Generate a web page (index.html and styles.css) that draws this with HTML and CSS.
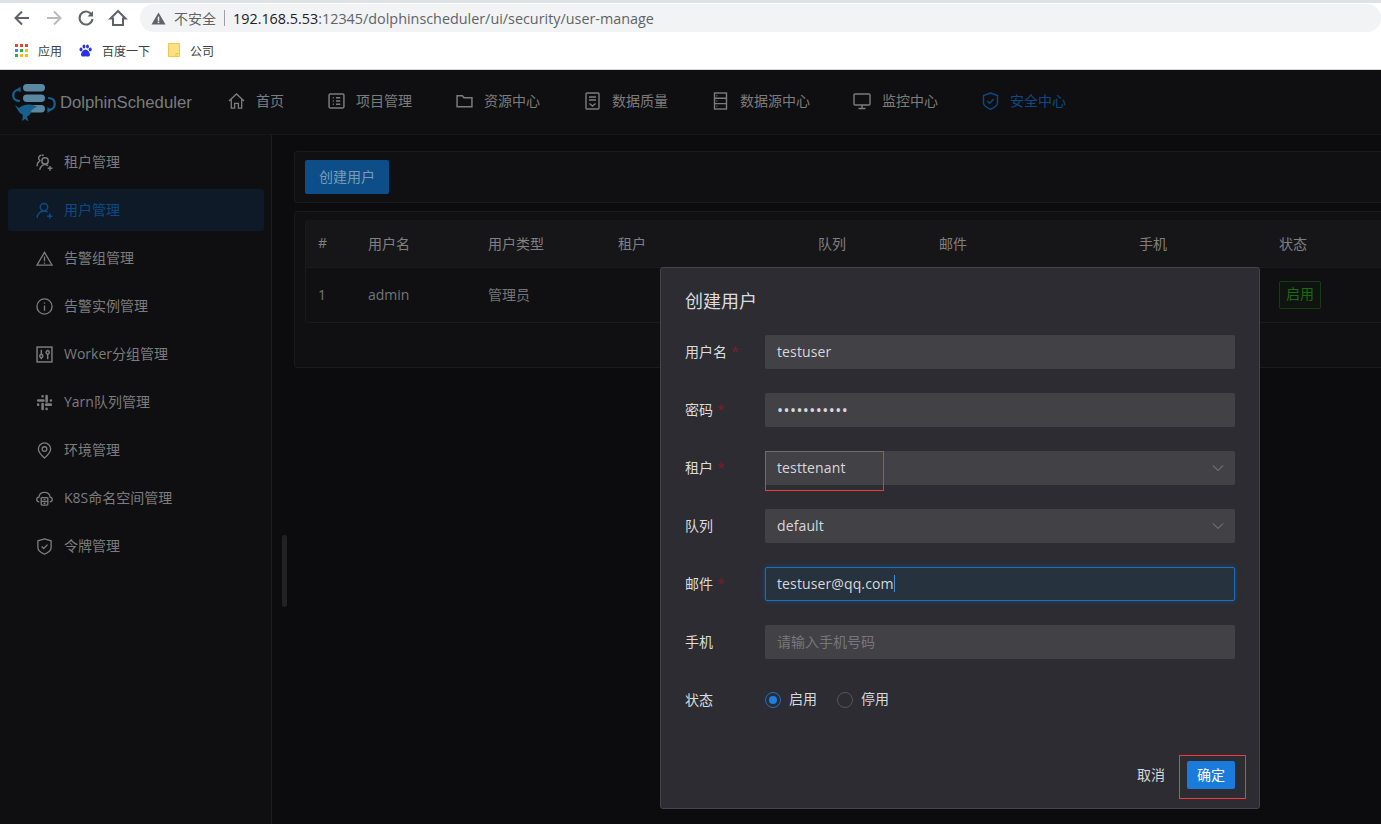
FILE: index.html
```html
<!DOCTYPE html>
<html lang="zh-CN">
<head>
<meta charset="utf-8">
<title>DolphinScheduler</title>
<link rel="stylesheet" href="styles.css">
</head>
<body>
<div class="browser">
  <div class="tabstrip"></div>
  <div class="toolbar">
    <div class="tool-btns">
      <svg class="tool" viewBox="0 0 20 20"><path d="M17 10H4M10 3.500 3.500 10l6.500 6.500"/></svg>
      <svg class="tool off" viewBox="0 0 20 20"><path d="M3 10h13M10 3.500l6.500 6.500-6.500 6.500"/></svg>
      <svg class="tool" viewBox="0 0 20 20"><path d="M15.800 7A6.500 6.500 0 1 0 16.500 11"/><path class="solid" d="M17 3v5.500h-5.500z"/></svg>
      <svg class="tool" viewBox="0 0 20 20"><path d="M10 3 2.500 10.500H5V17h10v-6.500h2.500z"/></svg>
    </div>
    <div class="omnibox">
      <svg class="warn" viewBox="0 0 16 16"><path d="M8 1.500 15.500 14.500H.5z"/><rect class="warn-mark" x="7.200" y="6" width="1.600" height="4.500"/><rect class="warn-mark" x="7.200" y="11.300" width="1.600" height="1.600"/></svg>
      <span class="insecure">不安全</span>
      <span class="omni-sep"></span>
      <span class="url"><span class="url-host">192.168.5.53</span>:12345/dolphinscheduler/ui/security/user-manage</span>
    </div>
  </div>
  <div class="bookmarks">
    <div class="bookmark">
      <svg class="bm-icon" viewBox="0 0 13 13"><rect width="3" height="3" fill="#ea4335"/><rect x="5" width="3" height="3" fill="#ea4335"/><rect x="10" width="3" height="3" fill="#ea4335"/><rect y="5" width="3" height="3" fill="#4285f4"/><rect x="5" y="5" width="3" height="3" fill="#34a853"/><rect x="10" y="5" width="3" height="3" fill="#fbbc05"/><rect y="10" width="3" height="3" fill="#34a853"/><rect x="5" y="10" width="3" height="3" fill="#fbbc05"/><rect x="10" y="10" width="3" height="3" fill="#fbbc05"/></svg>
      <span>应用</span>
    </div>
    <div class="bookmark">
      <svg class="bm-icon" viewBox="0 0 13 13" fill="#2932e1"><ellipse cx="2" cy="5.500" rx="1.500" ry="2"/><ellipse cx="5" cy="2.500" rx="1.400" ry="2"/><ellipse cx="8.500" cy="2.500" rx="1.400" ry="2"/><ellipse cx="11.200" cy="5.500" rx="1.500" ry="2"/><path d="M6.500 5.500c2 0 4.500 3 4.500 5.200 0 2-2.500 2-4.500 1.600-2 .4-4.500.4-4.500-1.600C2 8.500 4.500 5.500 6.500 5.500z"/></svg>
      <span>百度一下</span>
    </div>
    <div class="bookmark bookmark-last">
      <svg class="bm-icon folder" viewBox="0 0 12 14"><path d="M.5.500h7l4 0v13H.5z" fill="#ffe082" stroke="#f4c842"/><path d="M8 13V10.500h3.500" fill="none" stroke="#f4c842"/></svg>
      <span>公司</span>
    </div>
  </div>
</div>

<div class="app">
  <header class="topbar">
    <div class="brand">
      <svg class="logo" viewBox="0 0 44 37">
        <rect class="logo-pill" x="11" y="0" width="22" height="7.500" rx="3.700"/>
        <rect class="logo-pill" x="11" y="10.500" width="22" height="7.500" rx="3.700"/>
        <rect class="logo-pill" x="11" y="21" width="22" height="7.500" rx="3.700"/>
        <path class="logo-arc" d="M8.500 5.500C4 5.500 1.200 8 1.200 11.500S4 17 8 17"/>
        <path class="logo-fish" d="M8.500 2.500v6L4.500 5.500z"/>
        <path class="logo-arc" d="M36 14c4.500 0 6.800 2.500 6.800 6s-3 6-7.300 6"/>
        <path class="logo-fish" d="M35.500 23v6l4-3z"/>
        <path class="logo-fish" d="M3 21l4 3c2.500-2 6-3.500 10-3.500 3.500 0 6.500 1 8 2.500-2.500 .5-3.500 2-5.500 3 0 4-3 6-4.500 6.500.5 1.500 1 3 1.500 5l-3.500-2.500-3 2c.5-2 1-4 .5-6.500C7 29 6.500 27 5.500 25.500z"/>
      </svg>
      <span class="brand-name">DolphinScheduler</span>
    </div>
    <nav class="nav">
      <a class="nav-item"><svg class="ico nav-ico" viewBox="0 0 18 18"><path d="M1 9 9 1.500 17 9M3.500 7.500V16.500H7V11.500H11V16.500H14.500V7.500"/></svg><span>首页</span></a>
      <a class="nav-item"><svg class="ico nav-ico" viewBox="0 0 16 16"><rect x="1" y="1.500" width="14" height="13" rx="1"/><path d="M4.500 5h1M4.500 8h1M4.500 11h1M7.500 5h4M7.500 8h4M7.500 11h4"/></svg><span>项目管理</span></a>
      <a class="nav-item"><svg class="ico nav-ico" viewBox="0 0 16 16"><path d="M1 3h5l1.500 2H15v8.500H1z"/></svg><span>资源中心</span></a>
      <a class="nav-item"><svg class="ico nav-ico" viewBox="0 0 16 18"><rect x="1.500" y="1" width="13" height="16" rx="1"/><path d="M4.500 5h7M4.500 8h7M5 11.500 8 14l3-2.500"/></svg><span>数据质量</span></a>
      <a class="nav-item"><svg class="ico nav-ico" viewBox="0 0 16 18"><rect x="2" y="1" width="12" height="16"/><path d="M2 6.300h12M2 11.600h12M4 3.700h.8M4 9h.8M4 14.300h.8"/></svg><span>数据源中心</span></a>
      <a class="nav-item nav-tight"><svg class="ico nav-ico monitor" viewBox="0 0 18 18"><rect x="1" y="2" width="16" height="11" rx="1"/><path d="M9 13v3M5.500 16.500h7"/></svg><span>监控中心</span></a>
      <a class="nav-item active"><svg class="ico nav-ico" viewBox="0 0 16 18"><path d="M8 1 15 3.500V11c0 2.500-4 5-7 6.300C5 16 1 13.500 1 11V3.500z"/><path d="M5 9l2.200 2.200L11.200 7"/></svg><span>安全中心</span></a>
    </nav>
  </header>

  <div class="body-row">
    <aside class="sidebar">
      <a class="side-item"><svg class="ico side-ico" viewBox="0 0 16 16"><circle cx="8.500" cy="6.500" r="3"/><path d="M5 1.200a2.800 2.800 0 0 0-1.500 5C2 7.500 1 9.500 1 11.500M5.500 1c.6 0 1.200.2 1.700.6M3.500 15c.3-2.600 2.400-5 5-5 1 0 2 .3 2.800.9M11 13.500h4.500M13.200 11.300v4.500"/></svg><span>租户管理</span></a>
      <a class="side-item active"><svg class="ico side-ico" viewBox="0 0 16 16"><circle cx="7.500" cy="4.800" r="3.500"/><path d="M1 15c.3-3.500 3-6.500 6.500-6.500 1.300 0 2.500.4 3.500 1.100M10.500 13.300h5M13 10.800v5"/></svg><span>用户管理</span></a>
      <a class="side-item"><svg class="ico side-ico" viewBox="0 0 18 16"><path d="M9 1.500 17 15H1z"/><path d="M9 6v5M9 12.300v1.200"/></svg><span>告警组管理</span></a>
      <a class="side-item"><svg class="ico side-ico" viewBox="0 0 18 18"><circle cx="9" cy="9" r="8"/><path d="M9 8v5.500M9 4.800v1.400"/></svg><span>告警实例管理</span></a>
      <a class="side-item"><svg class="ico side-ico" viewBox="0 0 16 16"><rect x="1" y="1" width="14" height="14"/><path d="M5 3.500v9M11 3.500v9"/><circle class="dot" cx="5" cy="9.500" r="1.500"/><circle class="dot" cx="11" cy="6" r="1.500"/></svg><span>Worker分组管理</span></a>
      <a class="side-item"><svg class="ico side-ico slack" viewBox="0 0 16 16"><path d="M2 6.200h5M6.200 2.200h.01M10 2v5M14 6.200h.01M9.500 10h4.500M10 14h.01M6.200 9.500V14M2 10h.01"/></svg><span>Yarn队列管理</span></a>
      <a class="side-item"><svg class="ico side-ico" viewBox="0 0 16 18"><path d="M8 17C5 14.500 1.500 11.500 1.500 7.500a6.500 6.500 0 0 1 13 0C14.500 11.500 11 14.500 8 17z"/><circle cx="8" cy="7.500" r="2.500"/></svg><span>环境管理</span></a>
      <a class="side-item"><svg class="ico side-ico" viewBox="0 0 18 16"><path d="M3.500 11.500C1.800 11.500.8 10.300.8 9s1-2.300 2.300-2.500C3.500 3.500 6 1.500 9 1.500s5.500 2 5.900 5c1.300.2 2.300 1.200 2.300 2.500s-1 2.500-2.700 2.500"/><rect x="5.500" y="7" width="7" height="8" rx=".8"/><path d="M5.500 11h7M8 9h2M8 13h2"/></svg><span>K8S命名空间管理</span></a>
      <a class="side-item"><svg class="ico side-ico" viewBox="0 0 16 18"><path d="M8 1 15 3v7c0 3.500-3.500 5.700-7 7-3.500-1.300-7-3.500-7-7V3z"/><path d="M5 9l2.200 2.200L11.200 7"/></svg><span>令牌管理</span></a>
    </aside>

    <main class="content">
      <div class="scroll-thumb"></div>
      <section class="card card-actions">
        <button class="btn-create">创建用户</button>
      </section>
      <section class="card card-table">
        <table class="users">
          <colgroup>
            <col class="c-idx"><col class="c-name"><col class="c-type"><col class="c-tenant"><col class="c-queue"><col class="c-mail"><col class="c-phone"><col class="c-state">
          </colgroup>
          <thead>
            <tr><th>#</th><th>用户名</th><th>用户类型</th><th>租户</th><th>队列</th><th>邮件</th><th>手机</th><th>状态</th></tr>
          </thead>
          <tbody>
            <tr><td>1</td><td>admin</td><td>管理员</td><td></td><td></td><td></td><td></td><td class="cell-state"><span class="tag">启用</span></td></tr>
          </tbody>
        </table>
      </section>
    </main>
  </div>
</div>

<div class="modal">
  <h2 class="modal-title">创建用户</h2>
  <div class="form">
    <div class="row">
      <label class="lbl">用户名<i class="req">*</i></label>
      <div class="field">testuser</div>
    </div>
    <div class="row">
      <label class="lbl">密码<i class="req">*</i></label>
      <div class="field dots">•••••••••••</div>
    </div>
    <div class="row">
      <label class="lbl">租户<i class="req">*</i></label>
      <div class="field select">testtenant<svg class="chev" viewBox="0 0 12 12"><path d="M1 3.500 6 8.500l5-5"/></svg></div>
    </div>
    <div class="row">
      <label class="lbl">队列</label>
      <div class="field select">default<svg class="chev" viewBox="0 0 12 12"><path d="M1 3.500 6 8.500l5-5"/></svg></div>
    </div>
    <div class="row">
      <label class="lbl">邮件<i class="req">*</i></label>
      <div class="field focus">testuser@qq.com<span class="caret"></span></div>
    </div>
    <div class="row">
      <label class="lbl">手机</label>
      <div class="field placeholder">请输入手机号码</div>
    </div>
    <div class="row">
      <label class="lbl">状态</label>
      <div class="radios">
        <span class="radio on"><i class="radio-dot"></i>启用</span>
        <span class="radio"><i class="radio-dot"></i>停用</span>
      </div>
    </div>
  </div>
  <div class="modal-foot">
    <button class="btn-cancel">取消</button>
    <button class="btn-ok">确定</button>
  </div>
</div>
<div class="mark mark-tenant"></div>
<div class="mark mark-ok"></div>
</body>
</html>
```
FILE: styles.css
```css
* { box-sizing: border-box; }
html, body { margin: 0; height: 100%; }
body {
  width: 1381px;
  height: 824px;
  overflow: hidden;
  position: relative;
  display: flex;
  flex-direction: column;
  background: #0c0c0e;
  font-family: "Open Sans", "Noto Sans CJK SC", sans-serif;
  font-size: 14px;
  color: #7f7f80;
}
a { display: flex; align-items: center; }
button { font: inherit; border: 0; padding: 0; cursor: pointer; }

/* browser chrome */
.browser { height: 70px; flex: none; background: #fff; border-bottom: 1px solid #d6d7d9; display: flex; flex-direction: column; }
.tabstrip { height: 3px; background: #dee1e6; flex: none; }
.toolbar { height: 30px; flex: none; display: flex; align-items: center; padding-left: 12px; }
.tool-btns { display: flex; gap: 12px; width: 128px; }
.tool { width: 20px; height: 20px; fill: none; stroke: #5f6368; stroke-width: 2; }
.tool.off { stroke: #b8babd; }
.tool .solid { fill: #5f6368; stroke: none; }
.omnibox { width: 1241px; height: 28px; background: #f1f3f4; border-radius: 14px; display: flex; align-items: center; padding-left: 11px; }
.warn { width: 15px; height: 15px; fill: #5f6368; flex: none; }
.warn-mark { fill: #f1f3f4; }
.insecure { margin-left: 8px; color: #5f6368; font-family: "Noto Sans CJK SC", sans-serif; font-size: 14px; }
.omni-sep { width: 1px; height: 16px; background: #9aa0a6; margin: 0 8px; }
.url { color: #5f6368; font-family: "Open Sans", sans-serif; font-size: 14.360px; }
.url-host { color: #202124; }
.bookmarks { flex: 1; display: flex; align-items: center; padding: 0 0 2px 15px; gap: 17px; font-size: 12px; color: #3c4043; font-family: "Noto Sans CJK SC", sans-serif; }
.bookmark { display: flex; align-items: center; gap: 10px; }
.bookmark-last { margin-left: 1px; }
.bm-icon { width: 13px; height: 13px; flex: none; }
.bm-icon.folder { width: 12px; height: 14px; }

/* app shell */
.app { flex: 1; display: flex; flex-direction: column; min-height: 0; }
.topbar { height: 65px; flex: none; display: flex; align-items: center; background: #0f0f11; border-bottom: 1px solid #17171a; }
.brand { width: 228px; flex: none; display: flex; align-items: center; padding-left: 12px; gap: 4px; }
.logo { width: 44px; height: 37px; flex: none; }
.logo-pill { fill: #5a87a1; }
.logo-arc { fill: none; stroke: #17618f; stroke-width: 2.200; }
.logo-fish { fill: #17608c; }
.brand-name { font-family: "Liberation Sans", sans-serif; font-size: 16.700px; color: #7b7b7d; padding-top: 2px; }
.nav { display: flex; gap: 44px; padding-bottom: 3px; }
.nav-item { gap: 11px; color: #7c7c7d; font-family: "Noto Sans CJK SC", sans-serif; }
.nav-item span { padding-bottom: 1px; }
.nav-item.active { color: #0d4a85; }
.nav-tight { margin-left: -1px; }
.ico { fill: none; stroke: currentColor; stroke-width: 1.400; flex: none; }
.nav-ico { width: 17px; height: 18px; }
.nav-ico.monitor { width: 18px; }
.ico .dot { fill: #0f0f11; }

.body-row { flex: 1; display: flex; min-height: 0; }
.sidebar { width: 272px; flex: none; background: #0f0f11; border-right: 1px solid #1c1c1f; padding: 6px 7px 0 8px; display: flex; flex-direction: column; gap: 6px; }
.side-item { height: 42px; padding-left: 28px; gap: 11px; border-radius: 3px; color: #7c7c7d; }
.side-item span { padding-bottom: 2px; }
.side-item.active { background: #0e1a28; color: #0d4a85; }
.side-ico { width: 17px; height: 17px; }
.slack { stroke-width: 2.400; stroke-linecap: round; }

.content { flex: 1; min-width: 0; position: relative; padding: 16px 0 0 22px; display: flex; flex-direction: column; gap: 8px; background: #0c0c0e; }
.scroll-thumb { position: absolute; left: 10px; top: 400px; width: 5px; height: 72px; border-radius: 3px; background: #222224; }
.card { width: 1200px; background: #101013; border: 1px solid #1b1b1e; border-radius: 3px; padding: 8px 10px; }
.card-actions { height: 52px; }
.card-table { padding-bottom: 44px; }
.btn-create { width: 84px; height: 34px; padding-bottom: 3px; border-radius: 2px; background: #0e4e88; color: #7a9cb5; font-family: "Noto Sans CJK SC", sans-serif; }

.users { width: 1178px; table-layout: fixed; border-collapse: separate; border-spacing: 0; border: 1px solid #1b1b1e; border-top: 0; border-radius: 3px; }
.c-idx { width: 50px; }
.c-name { width: 120px; }
.c-type { width: 130px; }
.c-tenant { width: 200px; }
.c-queue { width: 121px; }
.c-mail { width: 200px; }
.c-phone { width: 140px; }
.users th, .users td { padding: 0 12px 2px; text-align: left; font-weight: 400; }
.users th { height: 48px; background: #161619; color: #808080; border-bottom: 1px solid #1b1b1e; }
.users td { height: 54px; color: #757576; }
.users .cell-state { padding-bottom: 0; }
.tag { display: inline-block; height: 28px; line-height: 24px; padding: 0 6px; border: 1px solid #163d11; border-radius: 2px; color: #1f6a10; background: #0f1410; }

/* modal */
.modal { position: absolute; left: 660px; top: 267px; width: 600px; height: 542px; background: #2c2c32; border: 1px solid #44444a; border-radius: 3px; padding: 23px 24px 0; display: flex; flex-direction: column; }
.modal-title { margin: 0 0 24px; height: 20px; font-size: 18px; line-height: 20px; font-weight: 400; color: #dcdcdd; }
.form { display: flex; flex-direction: column; gap: 24px; }
.row { display: flex; align-items: center; height: 34px; }
.lbl { width: 80px; flex: none; padding-bottom: 2px; font-size: 14px; color: #dcdcdd; }
.req { font-style: normal; color: #7a1e27; margin-left: 4px; }
.field { flex: 1; height: 34px; display: flex; align-items: center; padding: 0 0 2px 12px; background: #414146; border-radius: 2px; color: #d8d8da; font-size: 14px; letter-spacing: .12px; position: relative; }
.dots { letter-spacing: .45px; font-family: "Open Sans", sans-serif; font-size: 16px; padding-bottom: 0; }
.chev { position: absolute; right: 11px; top: 11px; width: 12px; height: 12px; fill: none; stroke: #8a8a8e; stroke-width: 1; }
.focus { background: #27323f; border: 1px solid #1a6fc0; padding-left: 11px; box-shadow: 0 0 6px rgba(24,120,210,.35); }
.caret { width: 1px; height: 17px; background: #3a8fe0; }
.placeholder { color: #77777b; letter-spacing: 0; }
.radios { display: flex; gap: 20px; font-size: 14px; color: #d8d8da; }
.radio { display: flex; align-items: center; gap: 8px; line-height: 20px; padding-bottom: 2px; }
.radio-dot { width: 16px; height: 16px; margin-top: 2px; border-radius: 50%; border: 1px solid #55555a; display: block; position: relative; }
.radio.on .radio-dot { border-color: #1a73c4; }
.radio.on .radio-dot::after { content: ""; position: absolute; inset: 3px; border-radius: 50%; background: #1a7fe0; }
.modal-foot { margin-top: 44px; display: flex; justify-content: flex-end; align-items: center; gap: 22px; }
.btn-cancel { background: none; color: #d8d8da; font-size: 14px; padding-bottom: 2px; }
.btn-ok { width: 48px; height: 28px; padding-bottom: 2px; background: #1a7bdb; color: #fff; border-radius: 2px; font-size: 14px; }

/* red annotation boxes drawn over the screenshot */
.mark { position: absolute; border: 1px solid #ee3b3b; }
.mark-tenant { left: 765px; top: 451px; width: 119px; height: 40px; border-top-color: #6e6e72; border-left-color: #6e6e72; border-right-color: #b94a4a; }
.mark-ok { left: 1179px; top: 755px; width: 67px; height: 44px; }
```
